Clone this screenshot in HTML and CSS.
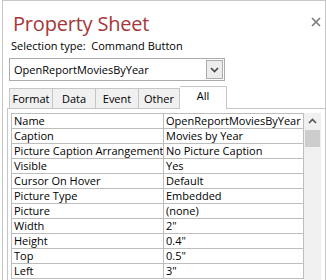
FILE: index.html
```html
<!DOCTYPE html>
<html>
<head>
<meta charset="utf-8">
<link rel="stylesheet" href="styles.css">
</head>
<body>
<div class="sheet">
  <div class="head">
    <h1 class="title">Property Sheet</h1>
    <svg class="close" width="10" height="10" viewBox="0 0 10 10"><path d="M1 1L9 9M9 1L1 9" stroke="#7a7a7a" stroke-width="1.6"/></svg>
  </div>
  <div class="sel">Selection type:&nbsp;&nbsp;Command Button</div>
  <div class="combo">
    <span class="combo-text">OpenReportMoviesByYear</span>
    <span class="combo-btn"><svg width="9" height="6" viewBox="0 0 9 6"><path d="M1 1L4.5 4.5L8 1" fill="none" stroke="#444" stroke-width="1.6"/></svg></span>
  </div>
  <div class="tabs">
    <div class="tab">Format</div>
    <div class="tab">Data</div>
    <div class="tab">Event</div>
    <div class="tab">Other</div>
    <div class="tab active">All</div>
  </div>
  <div class="panel">
    <table class="grid">
      <tr><td class="k">Name</td><td class="v">OpenReportMoviesByYear</td></tr>
      <tr><td class="k">Caption</td><td class="v">Movies by Year</td></tr>
      <tr><td class="k">Picture Caption Arrangement</td><td class="v">No Picture Caption</td></tr>
      <tr><td class="k">Visible</td><td class="v">Yes</td></tr>
      <tr><td class="k">Cursor On Hover</td><td class="v">Default</td></tr>
      <tr><td class="k">Picture Type</td><td class="v">Embedded</td></tr>
      <tr><td class="k">Picture</td><td class="v">(none)</td></tr>
      <tr><td class="k">Width</td><td class="v">2"</td></tr>
      <tr><td class="k">Height</td><td class="v">0.4"</td></tr>
      <tr><td class="k">Top</td><td class="v">0.5"</td></tr>
      <tr><td class="k">Left</td><td class="v">3"</td></tr>
    </table>
    <div class="scroll">
      <div class="arrow"><svg width="9" height="6" viewBox="0 0 9 6"><path d="M1 5L4.5 1.5L8 5" fill="none" stroke="#555" stroke-width="1.6"/></svg></div>
      <div class="thumb"></div>
    </div>
  </div>
</div>
</body>
</html>
```
FILE: styles.css
```css
html, body {
  margin: 0;
  padding: 0;
  background: #fff;
  overflow: hidden;
}
body {
  font-family: "Open Sans", "Noto Sans", sans-serif;
  font-size: 11px;
  color: #000;
}
.sheet {
  margin-left: 2px;
  width: 322px;
  height: 300px;
  border: 1px solid #c6c6c6;
  box-sizing: content-box;
  position: relative;
}
.head {
  height: 36px;
}
.title {
  margin: 0;
  padding: 9px 0 0 10px;
  font-weight: normal;
  font-size: 20px;
  line-height: 28px;
  letter-spacing: -0.2px;
  color: #a4373a;
}
.close {
  position: absolute;
  top: 16px;
  right: 4px;
}
.sel {
  padding-left: 8px;
  line-height: 17px;
  height: 21px;
}
.combo {
  margin-left: 6px;
  width: 214px;
  height: 21px;
  border: 1px solid #ababab;
  display: flex;
  align-items: center;
  justify-content: space-between;
}
.combo-text {
  padding-left: 4px;
}
.combo-btn {
  width: 17px;
  height: 19px;
  margin-right: 1px;
  border: 1px solid #acacac;
  box-sizing: border-box;
  background: #ececec;
  display: flex;
  align-items: center;
  justify-content: center;
}
.tabs {
  margin-top: 5px;
  padding-left: 6px;
  display: flex;
  align-items: flex-end;
  height: 22px;
  position: relative;
  z-index: 1;
}
.tab {
  height: 20px;
  box-sizing: border-box;
  border: 1px solid #c6c6c6;
  border-bottom: none;
  border-right: none;
  background: #f0f0f0;
  line-height: 19px;
  text-align: center;
  width: 43px;
}
.tab:nth-child(4) {
  width: 42px;
  border-right: 1px solid #c6c6c6;
}
.tab.active {
  width: 47px;
  height: 23px;
  background: #fff;
  border-right: 1px solid #c6c6c6;
  border-left: none;
  margin-bottom: -1px;
  line-height: 18px;
}
.panel {
  margin-left: 4px;
  width: 314px;
  height: 200px;
  border: 1px solid #c6c6c6;
  border-right-width: 2px;
  display: flex;
  align-items: flex-start;
  padding: 4px 0 0 3px;
  box-sizing: content-box;
}
.grid {
  border-collapse: collapse;
  width: 293px;
  table-layout: fixed;
}
.grid td {
  border: 1px solid #bdbdbd;
  height: 14px;
  padding: 0 0 0 2px;
  line-height: 14px;
  white-space: nowrap;
  overflow: hidden;
}
.grid td.k {
  width: 149px;
}
.scroll {
  width: 17px;
  height: 190px;
  background: #f0f0f0;
  margin-top: 0;
}
.arrow {
  height: 16px;
  display: flex;
  align-items: center;
  justify-content: center;
}
.thumb {
  margin: 1px 1px 0 1px;
  height: 17px;
  background: #cdcdcd;
}
```
